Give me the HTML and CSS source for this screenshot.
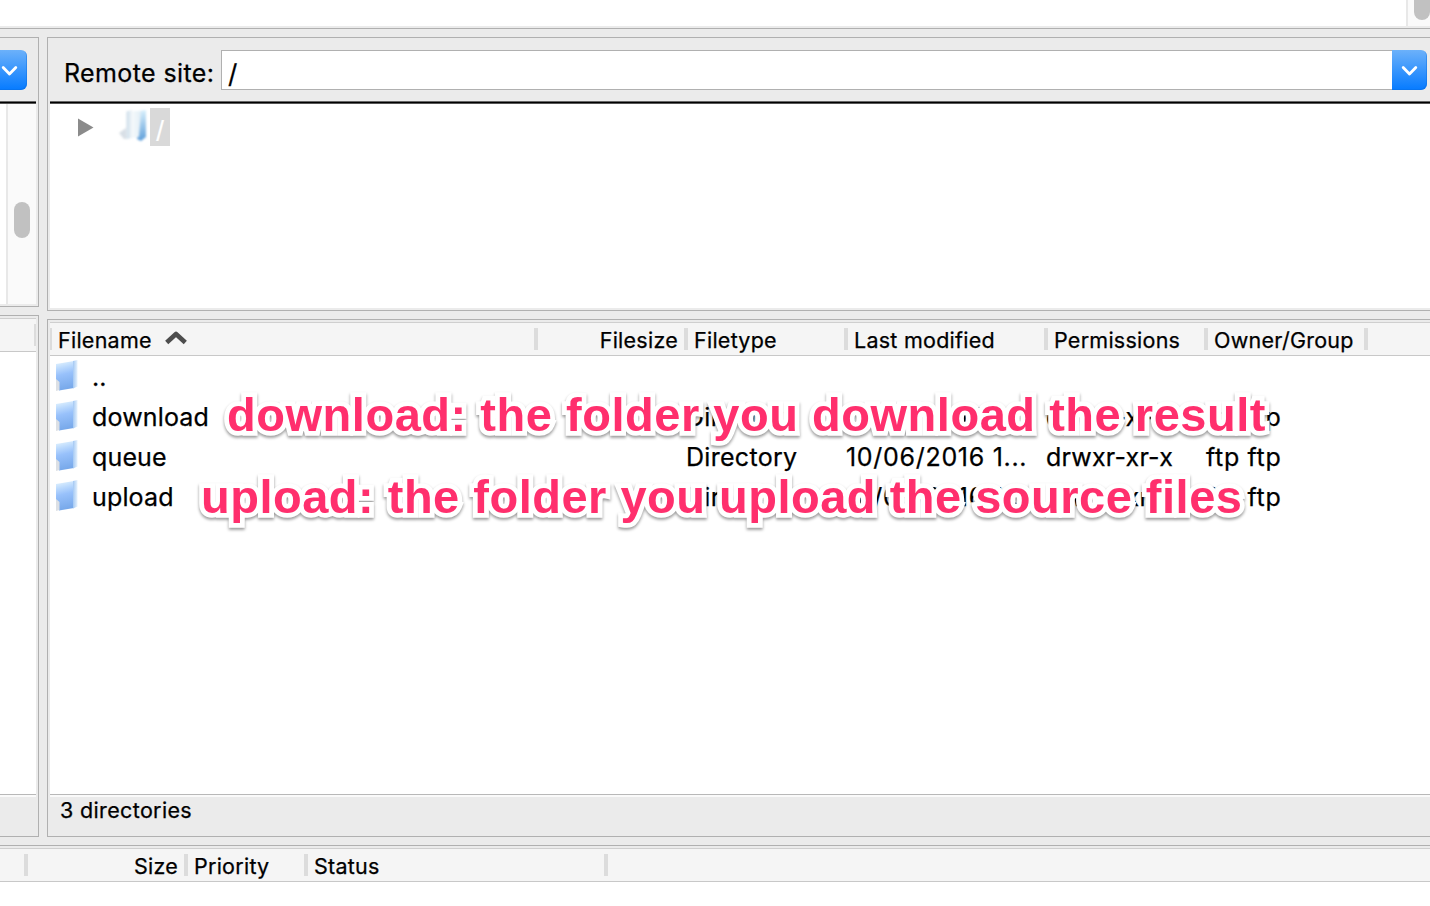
FILE: index.html
```
<!DOCTYPE html>
<html lang="en">
<head>
<meta charset="utf-8">
<title>Remote site</title>
<link rel="stylesheet" href="styles.css">
</head>
<body>
<svg class="defs" width="0" height="0" aria-hidden="true">
  <defs>
    <linearGradient id="face" x1="0" y1="0" x2="0.15" y2="1">
      <stop offset="0" stop-color="#e8f7fe"/>
      <stop offset="0.28" stop-color="#b9d8fd"/>
      <stop offset="0.5" stop-color="#98c1fb"/>
      <stop offset="1" stop-color="#78a9ea"/>
    </linearGradient>
    <linearGradient id="edge" x1="0" y1="0" x2="1" y2="0">
      <stop offset="0" stop-color="#a3c8f3"/>
      <stop offset="1" stop-color="#e6f2fd"/>
    </linearGradient>
    <linearGradient id="paper" x1="0" y1="0" x2="1" y2="0">
      <stop offset="0" stop-color="#cfdfeb"/>
      <stop offset="0.4" stop-color="#f5f9fb"/>
      <stop offset="1" stop-color="#e2eef6"/>
    </linearGradient>
    <linearGradient id="back" x1="0" y1="0" x2="0" y2="1">
      <stop offset="0" stop-color="#d9f0fc"/>
      <stop offset="1" stop-color="#609fda"/>
    </linearGradient>
    <symbol id="folder" viewBox="0 0 24 32">
      <path d="M1 4 19 1 19 28 4 30.5 4 23 1 20Z" fill="url(#face)"/>
      <path d="M18 1 22.5 0V26.5L18 28.5Z" fill="url(#edge)"/>
      <path d="M1 19 4.5 22V30L1 31Z" fill="#dce0e5"/>
    </symbol>
  </defs>
</svg>
<div class="window">
  <div class="log"><div class="log-text"></div><div class="log-scroll"><i></i></div></div>
  <div class="rule"></div>
  <div class="main">
    <div class="local">
      <section class="panel local-tree">
        <div class="pathbar"><span class="drop"><svg width="17" height="12" viewBox="0 0 17 12"><path d="M2.2 2.5 8.5 9 14.8 2.5"/></svg></span></div>
        <div class="tree"><div class="track"><i></i></div></div>
      </section>
      <section class="panel local-list">
        <div class="head"></div>
        <div class="list"></div>
        <div class="status"></div>
      </section>
    </div>
    <div class="remote">
      <section class="panel remote-tree">
        <div class="pathbar">
          <label class="label">Remote site:</label>
          <div class="field">/</div>
          <span class="drop"><svg width="17" height="12" viewBox="0 0 17 12"><path d="M2.2 2.5 8.5 9 14.8 2.5"/></svg></span>
        </div>
        <div class="tree">
          <svg class="twisty" width="16" height="19" viewBox="0 0 16 19"><path d="M0 0.5 15.5 9.5 0 18.5Z"/></svg>
          <svg class="open" width="30" height="34" viewBox="0 0 30 34">
            <path d="M20 3 27 2 27 29 22 33 18 31Z" fill="url(#back)"/>
            <path d="M0 25 7 20 9 31 5 31Z" fill="#d8dfe6"/>
            <path d="M7 4 13 2 12 29 7 31Z" fill="#e4ecf2"/>
            <path d="M8 3 22 3 20 29 8 31Z" fill="url(#paper)"/>
          </svg>
          <span class="root">/</span>
        </div>
      </section>
      <section class="panel remote-list">
        <div class="head cols">
          <span class="first"><b>Filename</b><svg class="sort" width="24" height="16" viewBox="0 0 24 16"><path d="M2.7 12.5 12 4 21.3 12.5"/></svg></span>
          <span class="num"><b>Filesize</b></span>
          <span><b>Filetype</b></span>
          <span><b>Last modified</b></span>
          <span><b>Permissions</b></span>
          <span><b>Owner/Group</b></span>
          <span></span>
        </div>
        <div class="list">
          <div class="row cols"><span class="name"><svg width="24" height="32"><use href="#folder"/></svg><b>..</b></span></div>
          <div class="row cols"><span class="name"><svg width="24" height="32"><use href="#folder"/></svg><b>download</b></span><span></span><span class="type">Directory</span><span class="date">10/06/2016 1...</span><span class="perm">drwxr-xr-x</span><span class="own">ftp ftp</span></div>
          <div class="row cols"><span class="name"><svg width="24" height="32"><use href="#folder"/></svg><b>queue</b></span><span></span><span class="type">Directory</span><span class="date">10/06/2016 1...</span><span class="perm">drwxr-xr-x</span><span class="own">ftp ftp</span></div>
          <div class="row cols"><span class="name"><svg width="24" height="32"><use href="#folder"/></svg><b>upload</b></span><span></span><span class="type">Directory</span><span class="date">10/06/2016 1...</span><span class="perm">drwxr-xr-x</span><span class="own">ftp ftp</span></div>
        </div>
        <div class="status"><span>3 directories</span></div>
      </section>
    </div>
  </div>
  <div class="rule"></div>
  <div class="queue-head head"><span></span><span class="num"><b>Size</b></span><span><b>Priority</b></span><span><b>Status</b></span><span></span></div>
  <div class="queue"></div>
  <div class="note note-download">download: the folder you download the result</div>
  <div class="note note-upload">upload: the folder you upload the source files</div>
</div>
</body>
</html>
```

FILE: styles.css
```
* { box-sizing: border-box; }
body { margin: 0; font-family: Inter, "Liberation Sans", sans-serif; color: #000; -webkit-text-stroke: 0.25px currentColor; }
b { font-weight: inherit; }
.defs { position: absolute; }
.window { position: relative; width: 1430px; height: 906px; overflow: hidden; background: #ebebeb; display: flex; flex-direction: column; }

.log { height: 26px; flex: none; display: flex; background: #fff; }
.log-text { flex: 1; }
.log-scroll { width: 24px; border-left: 2px solid #e8e8e8; background: #fafafa; overflow: hidden; padding-left: 6px; }
.log-scroll i { display: block; width: 16px; height: 40px; margin-top: -20px; border-radius: 8px; background: #c1c1c1; }
.rule { flex: none; height: 1px; margin-top: 2px; background: #b0b0b0; }

.main { flex: none; height: 814px; padding-top: 8px; display: flex; gap: 8px; overflow: hidden; }
.local { width: 39px; flex: none; display: flex; flex-direction: column; gap: 8px; }
.remote { flex: 1; display: flex; flex-direction: column; gap: 8px; }
.panel { flex: none; border: 1px solid #b0b0b0; display: flex; flex-direction: column; }
.local .panel { border-left: 0; padding-right: 2px; }
.remote .panel { border-right: 0; padding-left: 2px; }
.local-tree { height: 270px; padding-bottom: 2px; }
.remote-tree { height: 274px; padding-bottom: 2px; }
.local-list { height: 522px; }
.remote-list { height: 518px; }

.pathbar { flex: none; height: 66px; display: flex; align-items: flex-start; padding-top: 12px; background: linear-gradient(#666 0 1px, #000 1px 2px, #555 2px) bottom / 100% 3px no-repeat; }
.drop { flex: none; width: 35px; height: 40px; border-radius: 0 6px 6px 0; background: linear-gradient(#6cb1fa, #067bff); box-shadow: inset -1px -1px 0 #0a6bdb66; display: flex; align-items: center; justify-content: center; }
.drop svg { margin-top: 1px; }
.drop path { fill: none; stroke: #fff; stroke-width: 2.8; stroke-linecap: round; stroke-linejoin: round; }
.local .drop { margin-left: -8px; }
.label { font-size: 25px; letter-spacing: .38px; line-height: 46px; width: 171px; padding-left: 14px; white-space: nowrap; }
.field { flex: 1; height: 40px; border: 1px solid #b0b0b0; border-right: 0; background: #fff; padding-left: 6px; font-size: 26px; line-height: 46px; }
.remote .drop { margin-right: 3px; }

.tree { flex: 1; background: #fff; display: flex; }
.track { margin-left: 6px; width: 30px; border-left: 2px solid #e8e8e8; background: #fafafa; padding: 98px 0 0 6px; }
.track i { display: block; width: 16px; height: 36px; border-radius: 8px; background: #c1c1c1; }
.twisty { margin: 14px 0 0 28px; fill: #8b8b8b; }
.open { margin: 4px 0 0 25px; filter: blur(0.8px); }
.root { margin: 4px 0 0 1px; width: 20px; height: 38px; background: #d9d9d9; color: #fff; font-size: 24px; line-height: 43px; text-align: center; }

.head { flex: none; height: 34px; margin-top: 2px; border-top: 1px solid #cfcfcf; border-bottom: 1px solid #c8c8c8; background: #f5f5f5; font-size: 21.5px; letter-spacing: .25px; line-height: 34px; }
.head span { position: relative; white-space: nowrap; padding-left: 6px; }
.head span::after { content: ""; position: absolute; right: -2px; top: 5px; width: 4px; height: 22px; background: #dcdcdc; }
.head span:last-child::after { display: none; }
.cols { display: grid; grid-template-columns: 486px 150px 160px 200px 160px 160px 1fr; }
.head .first { padding-left: 8px; }
.head .first::before { content: ""; position: absolute; left: 0; top: 5px; width: 2px; height: 22px; background: #dcdcdc; }
.head.cols > span:not(.first):not(.num), .queue-head span { padding-left: 8px; }
.head .num { text-align: right; padding-right: 8px; }
.sort { position: absolute; left: 114px; top: 7px; }
.sort path { fill: none; stroke: #4d4d4d; stroke-width: 4.6; stroke-linejoin: round; }
.local .head::after { content: ""; display: block; width: 2px; height: 22px; margin: 5px 0 0 34px; background: #dcdcdc; }

.list { flex: 1; background: #fff; }
.row { height: 40px; font-size: 25px; letter-spacing: .15px; line-height: 40px; white-space: nowrap; }
.remote .list { padding-top: 1px; }
.row .name { display: flex; padding-left: 5px; gap: 13px; }
.row svg { margin-top: 3px; filter: blur(0.6px); }
.row .type { letter-spacing: .3px; }
.row .date { letter-spacing: .7px; }
.row .perm { letter-spacing: .2px; }
.row .own { letter-spacing: .65px; }
.status { flex: none; height: 42px; border-top: 1px solid #b8b8b8; box-shadow: inset 0 2px #fafafa; font-size: 21.5px; letter-spacing: .35px; line-height: 31px; padding-left: 10px; }

.queue-head { display: grid; grid-template-columns: 26px 160px 120px 300px 1fr; }
.queue { flex: 1; background: #fff; }

.note { position: absolute; font: bold 47px/56px "Liberation Sans", Arial, sans-serif; color: #ff2f6d; white-space: nowrap; -webkit-text-stroke: 9.5px #fff; paint-order: stroke fill; stroke-linejoin: round; filter: drop-shadow(0 2px 1.5px rgba(0,0,0,.4)); }
.note-download { left: 227px; top: 387px; letter-spacing: .53px; }
.note-upload { left: 201px; top: 469px; letter-spacing: .5px; }
```
